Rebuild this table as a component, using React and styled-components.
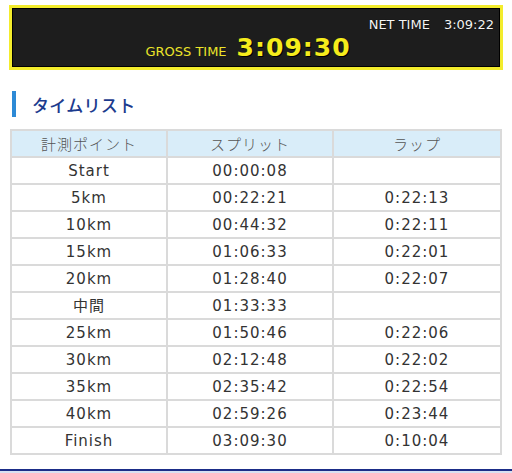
import styled, { createGlobalStyle } from "styled-components";

const GlobalStyle = createGlobalStyle`
    html, body {
        margin: 0;
        padding: 0;
        background: #fff;
    }
    body {
        font-family: "DejaVu Sans", "Noto Sans CJK JP", sans-serif;
        color: #333;
    }
`;

const Page = styled.div`
    width: 512px;
    height: 473px;
    padding: 5px 9px 0 9px;
    box-sizing: border-box;
    overflow: hidden;
`;

const Board = styled.div`
    height: 65px;
    box-sizing: border-box;
    border: 3px solid #f3ec2c;
    box-shadow: inset 0 0 0 1px #000;
    background: #1d1d1d;
    display: flex;
    flex-direction: column;
    padding: 9px 6px 0 0;
`;

const NetRow = styled.div`
    display: flex;
    justify-content: flex-end;
    gap: 14px;
    font-family: "DejaVu Sans", sans-serif;
    font-size: 13px;
    line-height: 16px;
    color: #f4f4f4;
    text-shadow: 0 0 1px #000;
`;

const GrossRow = styled.div`
    display: flex;
    justify-content: center;
    align-items: baseline;
    gap: 10px;
    padding-right: 10px;
`;

const GrossLabel = styled.span`
    font-family: "DejaVu Sans", sans-serif;
    font-size: 13px;
    color: #ece42a;
`;

const GrossTime = styled.span`
    font-family: "DejaVu Sans", sans-serif;
    font-weight: bold;
    font-size: 25px;
    line-height: 29px;
    letter-spacing: 1px;
    color: #f5ec1c;
    text-shadow: 1px 1px 0 #000;
`;

const TitleRow = styled.h2`
    display: flex;
    align-items: center;
    margin: 21px 0 0 3px;
    height: 26px;
    gap: 16px;
    font-family: "Noto Sans CJK JP", sans-serif;
    font-size: 17px;
    font-weight: 500;
    color: #1c3b8e;
    letter-spacing: 0.3px;
`;

const TitleBar = styled.span`
    width: 4px;
    height: 26px;
    background: #2d8ad6;
`;

const Table = styled.table`
    margin: 12px 0 0 1px;
    width: 492px;
    border-collapse: collapse;
    table-layout: fixed;
    font-family: "DejaVu Sans", "Noto Sans CJK JP", sans-serif;
    font-size: 15px;
    letter-spacing: 1px;
    color: #333;
`;

const HeadCell = styled.th`
    height: 25px;
    padding: 0;
    border: 2px solid #dadada;
    background: #d9edf9;
    font-family: "Noto Sans CJK JP", sans-serif;
    font-weight: 300;
    font-size: 15px;
    color: #555;
    text-align: center;
    width: ${(p) => (p.$w ? `${p.$w}px` : "auto")};
`;

const Cell = styled.td`
    height: 25px;
    padding: 0;
    border: 2px solid #dadada;
    text-align: center;
    line-height: 20px;
`;

const Footer = styled.div`
    margin: 14px -9px 0 -9px;
    height: 6px;
    border-top: 2px solid #1b2d88;
    background: #d8e0f2;
`;

const rows = [
    ["Start", "00:00:08", ""],
    ["5km", "00:22:21", "0:22:13"],
    ["10km", "00:44:32", "0:22:11"],
    ["15km", "01:06:33", "0:22:01"],
    ["20km", "01:28:40", "0:22:07"],
    ["中間", "01:33:33", ""],
    ["25km", "01:50:46", "0:22:06"],
    ["30km", "02:12:48", "0:22:02"],
    ["35km", "02:35:42", "0:22:54"],
    ["40km", "02:59:26", "0:23:44"],
    ["Finish", "03:09:30", "0:10:04"],
];

export default function App() {
    return (
        <Page>
            <GlobalStyle />
            <Board>
                <NetRow>
                    <span>NET TIME</span>
                    <span>3:09:22</span>
                </NetRow>
                <GrossRow>
                    <GrossLabel>GROSS TIME</GrossLabel>
                    <GrossTime>3:09:30</GrossTime>
                </GrossRow>
            </Board>
            <TitleRow>
                <TitleBar />
                タイムリスト
            </TitleRow>
            <Table>
                <thead>
                    <tr>
                        <HeadCell $w={154}>計測ポイント</HeadCell>
                        <HeadCell $w={164}>スプリット</HeadCell>
                        <HeadCell>ラップ</HeadCell>
                    </tr>
                </thead>
                <tbody>
                    {rows.map((r) => (
                        <tr key={r[0]}>
                            <Cell>{r[0]}</Cell>
                            <Cell>{r[1]}</Cell>
                            <Cell>{r[2]}</Cell>
                        </tr>
                    ))}
                </tbody>
            </Table>
            <Footer />
        </Page>
    );
}
